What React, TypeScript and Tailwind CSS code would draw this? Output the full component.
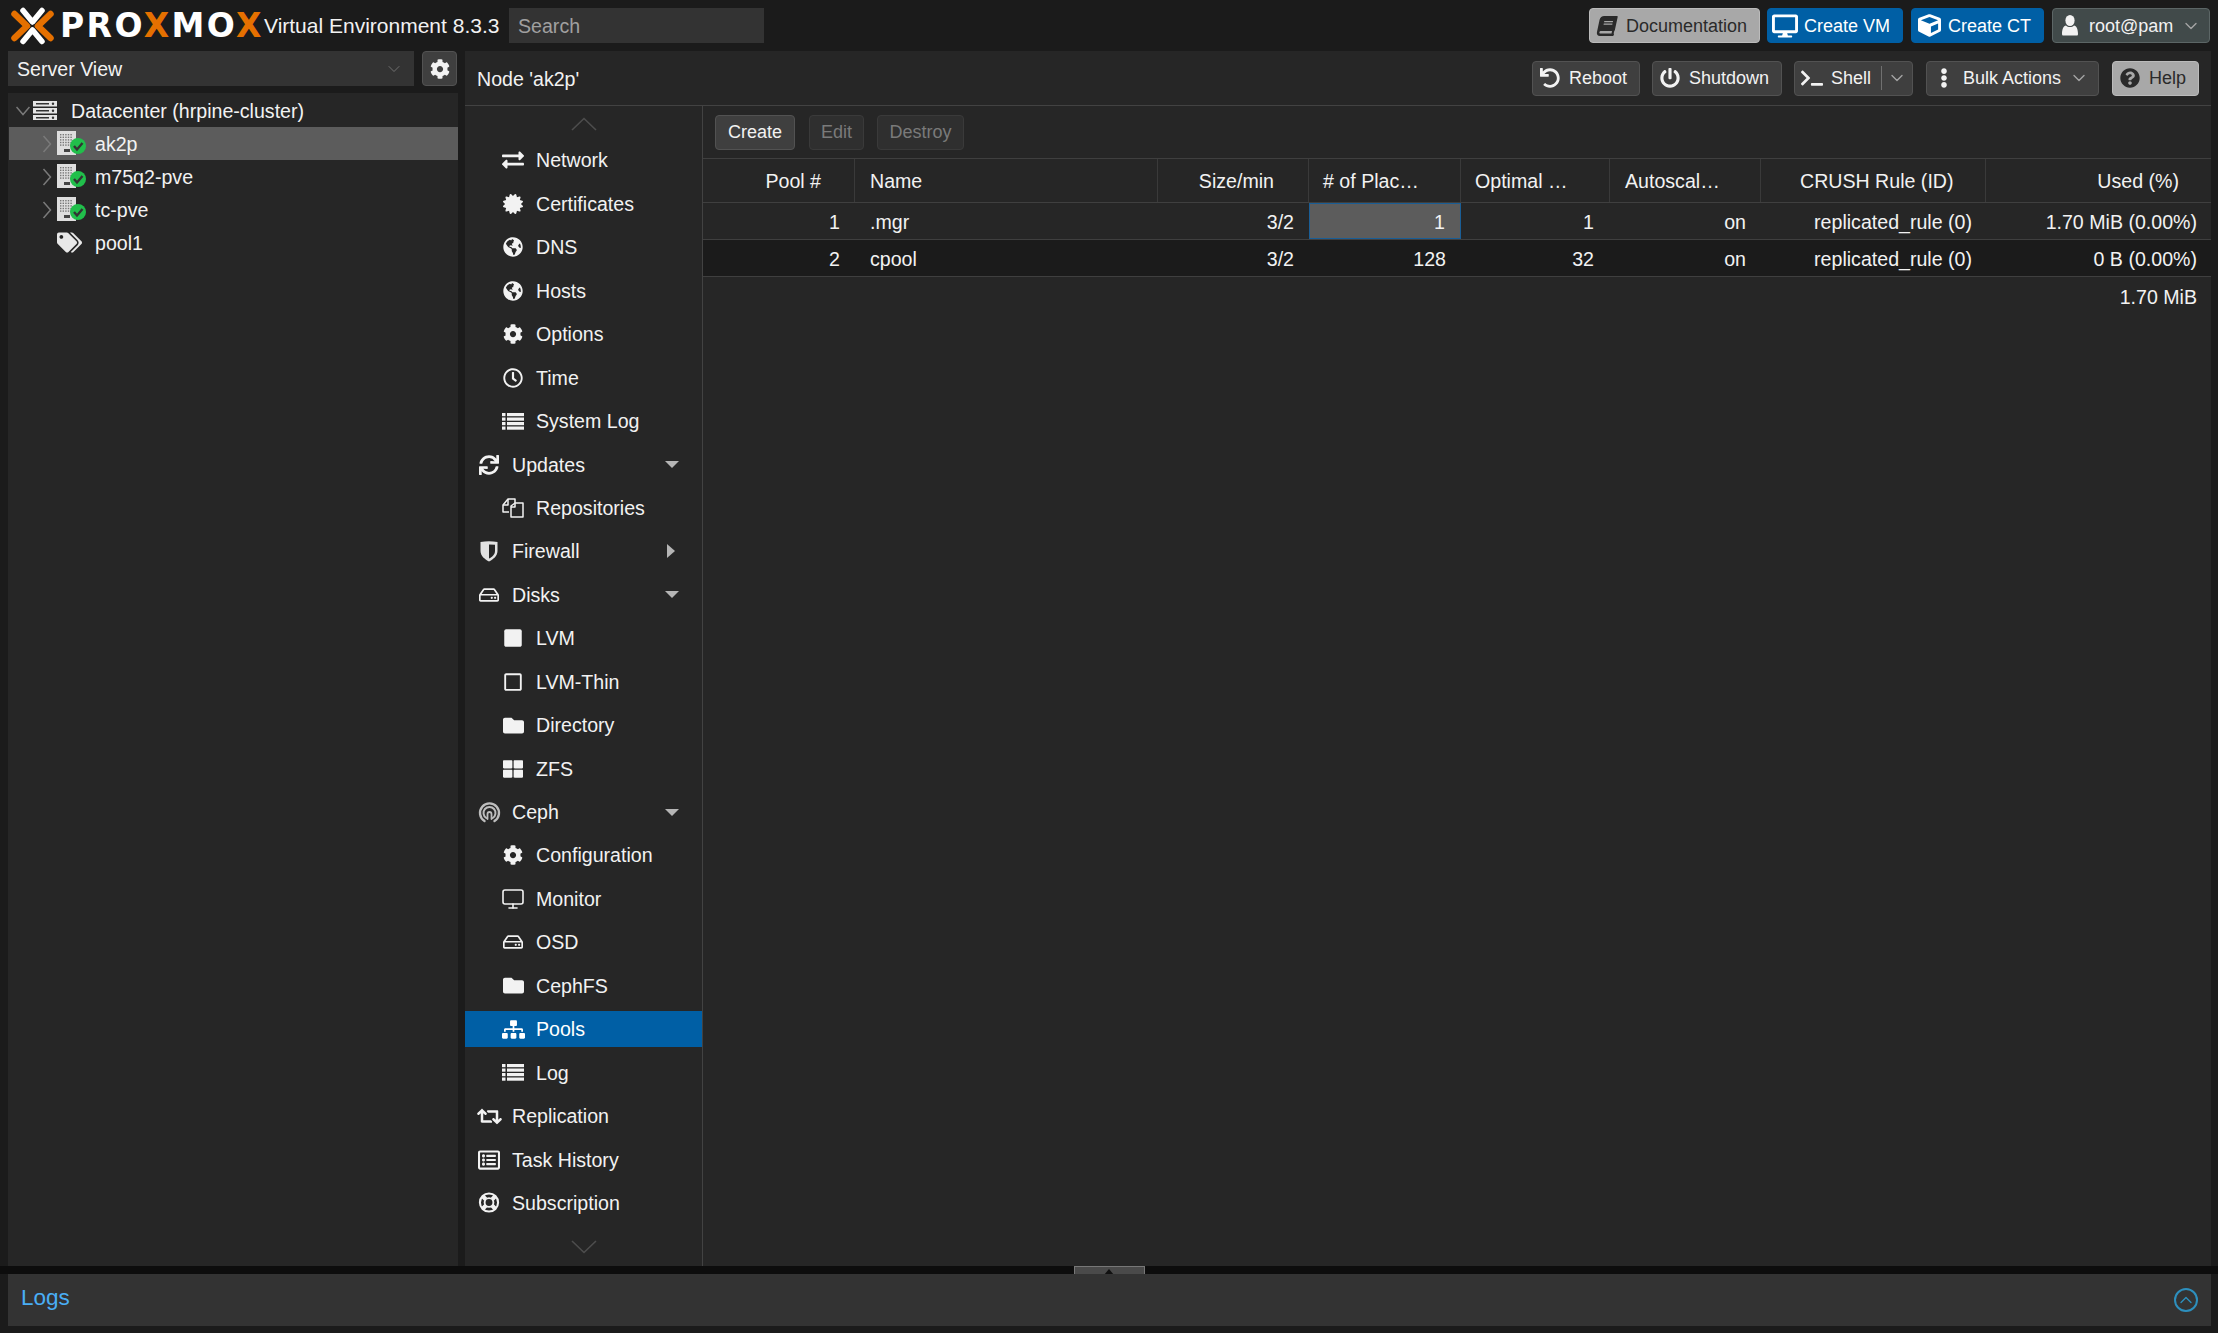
import type { ReactNode } from 'react';
import { ChevronDown, ChevronUp, Monitor } from 'lucide-react';
import {
  FaBook,
  FaCertificate,
  FaCog,
  FaCube,
  FaDesktop,
  FaEllipsisV,
  FaExchangeAlt,
  FaFolder,
  FaGlobeAmericas,
  FaPowerOff,
  FaQuestionCircle,
  FaRegClock,
  FaRegHdd,
  FaRegListAlt,
  FaRegSquare,
  FaRetweet,
  FaSitemap,
  FaSquare,
  FaSync,
  FaTags,
  FaTerminal,
  FaThLarge,
  FaUndo,
} from 'react-icons/fa';

function LogoMark() {
  return (
    <svg width="43" height="38" viewBox="0 0 43 38" fill="none" strokeLinecap="round" strokeLinejoin="round">
      <path d="M3.5 7 L16 19 L3.5 31 M39.5 7 L27 19 L39.5 31" stroke="#e57000" strokeWidth="6.5" />
      <path d="M12 3.5 L21.5 15 L31 3.5 M12 34.5 L21.5 23 L31 34.5" stroke="#ffffff" strokeWidth="5.5" />
    </svg>
  );
}

function DatacenterIcon() {
  return (
    <svg width="24" height="19" viewBox="0 0 24 19">
      {[0, 7, 14].map((y) => (
        <g key={y}>
          <rect x="0" y={y} width="24" height="5.5" fill="#e4e4e4" />
          <rect x="3" y={y + 2} width="13" height="1.5" fill="#333333" />
          <circle cx="20" cy={y + 2.75} r="1.2" fill="#333333" />
        </g>
      ))}
    </svg>
  );
}

function NodeIcon() {
  const dots = [];
  for (let r = 0; r < 5; r++) {
    for (let c = 0; c < 5; c++) {
      dots.push(<rect key={`${r}-${c}`} x={3 + c * 2.6} y={3 + r * 2.6} width="1.4" height="1.4" fill="#777777" />);
    }
  }
  return (
    <svg width="30" height="26" viewBox="0 0 30 26">
      <rect x="0" y="0" width="19" height="24" fill="#dedede" />
      {dots}
      <rect x="7" y="18" width="6" height="3" fill="#444444" />
      <circle cx="21" cy="15" r="8" fill="#21bf4b" />
      <path d="M17 15 L20 18.5 L25.5 12" fill="none" stroke="#333333" strokeWidth="2.4" />
    </svg>
  );
}

function CephIcon() {
  return (
    <svg width="23" height="22" viewBox="0 0 22 22" fill="none" stroke="#bdbdbd" strokeLinecap="round">
      <path d="M6 20 A9.5 9.5 0 1 1 16 20" strokeWidth="2.4" />
      <path d="M7.8 17 A6 6 0 1 1 14.2 17" strokeWidth="2" />
      <path d="M9 18 V13 A2 2 0 0 1 13 13 V18" strokeWidth="1.8" />
    </svg>
  );
}

function RowsIcon() {
  return (
    <svg width="22" height="17" viewBox="0 0 22 17" fill="#f2f2f2">
      {[0, 4.5, 9, 13.5].map((y) => (
        <g key={y}>
          <rect x="0" y={y} width="3.5" height="3.2" />
          <rect x="5" y={y} width="17" height="3.2" />
        </g>
      ))}
    </svg>
  );
}

function FilesIcon() {
  return (
    <svg width="22" height="20" viewBox="0 0 22 20" fill="none" stroke="#f2f2f2" strokeWidth="1.5" strokeLinejoin="round">
      <path d="M7 14 H1 V7 L6 1 H13 V5" />
      <path d="M6 1 V7 H1" />
      <path d="M9 19 V8 L13 5 H21 V19 Z" />
      <path d="M13 5 V9 H9" />
    </svg>
  );
}

function ShieldIcon() {
  return (
    <svg width="18" height="21" viewBox="0 0 18 21">
      <path d="M0.5 1 Q9 -0.5 17.5 1 V10 C17.5 15 13 18.5 9 20.5 C5 18.5 0.5 15 0.5 10 Z" fill="#e2e2e2" />
      <path d="M9 3.5 Q12 3.5 15 3.8 V10 C15 13.5 12 16 9 17.5 Z" fill="#262626" />
    </svg>
  );
}

function LifeRingIcon() {
  return (
    <svg width="22" height="21" viewBox="0 0 22 22" fill="none" stroke="#f2f2f2">
      <circle cx="11" cy="11" r="9.5" strokeWidth="2.2" />
      <circle cx="11" cy="11" r="4.6" strokeWidth="2" />
      <path d="M4.5 4.5 L7.5 7.5 M17.5 4.5 L14.5 7.5 M4.5 17.5 L7.5 14.5 M17.5 17.5 L14.5 14.5" strokeWidth="4.4" />
    </svg>
  );
}

function UserIcon() {
  return (
    <svg width="16" height="21" viewBox="0 0 16 21" fill="#f2f2f2">
      <ellipse cx="8" cy="5.5" rx="4.6" ry="5.5" />
      <path d="M1 20.5 Q0 20.5 0 19 C0 14 1.5 11 4 10.5 C6 12.5 10 12.5 12 10.5 C14.5 11 16 14 16 19 Q16 20.5 15 20.5 Z" />
    </svg>
  );
}

function TreeChevron({ open }: { open?: boolean }) {
  return (
    <svg width="14" height="20" viewBox="0 0 14 20" fill="none" stroke="#7a7a7a" strokeWidth="1.5" className="shrink-0">
      {open ? <path d="M0.5 6 L7 13.5 L13.5 6" /> : <path d="M3.5 2 L10.5 10 L3.5 18" />}
    </svg>
  );
}

function Btn({
  icon,
  label,
  w,
  tone,
  after,
}: {
  icon: ReactNode;
  label: string;
  w: string;
  tone: string;
  after?: ReactNode;
}) {
  return (
    <div className={`flex items-center rounded-[4px] border text-[18px] ${w} ${tone}`}>
      <span className="ml-[7px] flex w-[20px] justify-center text-[20px] [&>svg]:shrink-0">{icon}</span>
      <span className="ml-[9px] flex-1 whitespace-nowrap">{label}</span>
      {after}
    </div>
  );
}

const DARK_BTN = 'h-[35px] border-[#525252] bg-[#3f3f3f] text-[#f2f2f2]';
const BLUE_BTN = 'h-[35px] border-[#005fa5] bg-[#005fa5] text-[#ffffff]';
const GREY_BTN = 'h-[35px] border-[#bbbbbb] bg-[#a8a8a8] text-[#2a2a2a]';

type NavItem = { label: string; icon: ReactNode; sub?: boolean; caret?: 'down' | 'right'; active?: boolean };

const NAV: NavItem[] = [
  { label: 'Network', icon: <FaExchangeAlt className="text-[22px]" />, sub: true },
  { label: 'Certificates', icon: <FaCertificate />, sub: true },
  { label: 'DNS', icon: <FaGlobeAmericas />, sub: true },
  { label: 'Hosts', icon: <FaGlobeAmericas />, sub: true },
  { label: 'Options', icon: <FaCog />, sub: true },
  { label: 'Time', icon: <FaRegClock />, sub: true },
  { label: 'System Log', icon: <RowsIcon />, sub: true },
  { label: 'Updates', icon: <FaSync />, caret: 'down' },
  { label: 'Repositories', icon: <FilesIcon />, sub: true },
  { label: 'Firewall', icon: <ShieldIcon />, caret: 'right' },
  { label: 'Disks', icon: <FaRegHdd />, caret: 'down' },
  { label: 'LVM', icon: <FaSquare />, sub: true },
  { label: 'LVM-Thin', icon: <FaRegSquare />, sub: true },
  { label: 'Directory', icon: <FaFolder className="text-[21px]" />, sub: true },
  { label: 'ZFS', icon: <FaThLarge />, sub: true },
  { label: 'Ceph', icon: <CephIcon />, caret: 'down' },
  { label: 'Configuration', icon: <FaCog />, sub: true },
  { label: 'Monitor', icon: <Monitor size={24} strokeWidth={1.6} />, sub: true },
  { label: 'OSD', icon: <FaRegHdd />, sub: true },
  { label: 'CephFS', icon: <FaFolder className="text-[21px]" />, sub: true },
  { label: 'Pools', icon: <FaSitemap className="text-[23px]" />, sub: true, active: true },
  { label: 'Log', icon: <RowsIcon />, sub: true },
  { label: 'Replication', icon: <FaRetweet className="text-[25px]" /> },
  { label: 'Task History', icon: <FaRegListAlt className="text-[22px]" /> },
  { label: 'Subscription', icon: <LifeRingIcon /> },
];

function NavRow({ item }: { item: NavItem }) {
  return (
    <div
      className={`flex h-[36px] shrink-0 items-center ${item.sub ? 'pl-[35px]' : 'pl-[11px]'} ${
        item.active ? 'bg-[#005fa5] text-white' : ''
      }`}
    >
      <span className="flex w-[26px] justify-center text-[20px] [&>svg]:shrink-0">{item.icon}</span>
      <span className="ml-[10px] flex-1">{item.label}</span>
      {item.caret === 'down' && (
        <span className="mr-[23px] h-0 w-0 border-x-[7.5px] border-t-[7px] border-x-transparent border-t-[#b5b5b5]" />
      )}
      {item.caret === 'right' && (
        <span className="mr-[27px] h-0 w-0 border-y-[7px] border-l-[8px] border-y-transparent border-l-[#b5b5b5]" />
      )}
    </div>
  );
}

function TreeNode({ name, active }: { name: string; active?: boolean }) {
  return (
    <div className={`ml-[1px] flex h-[33px] items-center pl-[31px] ${active ? 'bg-[#5c5c5c]' : ''}`}>
      <TreeChevron />
      <span className="ml-[3px] flex"><NodeIcon /></span>
      <span className="ml-[8px]">{name}</span>
    </div>
  );
}

const COLS = 'grid grid-cols-[152px_303px_151px_152px_149px_151px_225px_225px]';
const HEAD_CELL = 'flex h-full items-center border-r border-[#3a3a3a] whitespace-nowrap';

function PoolRow({
  id,
  name,
  pgs,
  optimal,
  used,
  dark,
  selected,
}: {
  id: string;
  name: string;
  pgs: string;
  optimal: string;
  used: string;
  dark?: boolean;
  selected?: boolean;
}) {
  return (
    <div className={`${COLS} h-[37px] items-center border-b border-[#3f3f3f] ${dark ? 'bg-[#1b1b1b]' : ''}`}>
      <div className="pt-[2px] pr-[15px] text-right">{id}</div>
      <div className="pt-[2px] pl-[15px]">{name}</div>
      <div className="pt-[2px] pr-[15px] text-right">3/2</div>
      <div
        className={`flex h-full items-center justify-end pt-[2px] pr-[15px] ${
          selected ? 'border border-[#1a5e96] bg-[#5c5c5c]' : ''
        }`}
      >
        {pgs}
      </div>
      <div className="pt-[2px] pr-[16px] text-right">{optimal}</div>
      <div className="pt-[2px] pr-[15px] text-right">on</div>
      <div className="pt-[2px] pr-[14px] text-right">replicated_rule (0)</div>
      <div className="pt-[2px] pr-[14px] text-right">{used}</div>
    </div>
  );
}

export default function App() {
  return (
    <div className="flex h-[1333px] w-[2218px] flex-col overflow-hidden bg-[#1b1b1b] font-['Liberation_Sans',sans-serif] text-[19.6px] leading-[22px] text-[#f2f2f2]">
      {/* top bar */}
      <header className="flex h-[51px] shrink-0 items-center pr-[8px] pl-[11px]">
        <LogoMark />
        <span className="ml-[6px] w-[204px] shrink-0 font-['DejaVu_Sans',sans-serif] text-[33px] leading-none font-bold tracking-[2.4px] text-white">
          PRO<span className="text-[#e57000]">X</span>MO<span className="text-[#e57000]">X</span>
        </span>
        <span className="w-[245px] shrink-0 text-[21px] whitespace-nowrap">Virtual Environment 8.3.3</span>
        <div className="flex h-[35px] w-[255px] items-center bg-[#333333] pl-[9px] text-[#a0a0a0]">Search</div>
        <div className="ml-auto flex items-center gap-[7px]">
          <Btn icon={<FaBook className="-skew-x-12" />} label="Documentation" w="w-[171px]" tone={GREY_BTN} />
          <Btn icon={<FaDesktop className="text-[26px]" />} label="Create VM" w="w-[136px]" tone={BLUE_BTN} />
          <Btn icon={<FaCube className="text-[23px]" />} label="Create CT" w="ml-[1px] w-[133px]" tone={BLUE_BTN} />
          <Btn
            icon={<UserIcon />}
            label="root@pam"
            w="ml-[1px] w-[158px]"
            tone="h-[35px] border-[#5c6666] bg-[#414a4a] text-[#f2f2f2]"
            after={<ChevronDown size={20} strokeWidth={1.6} className="mr-[8px] text-[#a5a5a5]" />}
          />
        </div>
      </header>

      {/* main */}
      <div className="flex min-h-0 flex-1 gap-[7px] pl-[8px]">
        <aside className="flex w-[450px] flex-col gap-[7px]">
          <div className="flex h-[35px] gap-[8px]">
            <div className="flex w-[406px] items-center justify-between bg-[#333333] pr-[10px] pl-[9px]">
              Server View
              <ChevronDown size={20} strokeWidth={1.2} className="text-[#707070]" />
            </div>
            <div className="flex w-[35px] items-center justify-center rounded-[4px] border border-[#525252] bg-[#3f3f3f] text-[20px]">
              <FaCog />
            </div>
          </div>
          <div className="flex-1 bg-[#262626]">
            <div className="flex h-[34px] items-center pt-[1px] pl-[8px]">
              <TreeChevron open />
              <span className="ml-[3px] flex"><DatacenterIcon /></span>
              <span className="ml-[14px]">Datacenter (hrpine-cluster)</span>
            </div>
            <TreeNode name="ak2p" active />
            <TreeNode name="m75q2-pve" />
            <TreeNode name="tc-pve" />
            <div className="flex h-[33px] items-center pl-[49px]">
              <span className="flex w-[38px] text-[25px] text-[#e8e8e8]"><FaTags /></span>
              {'pool1'}
            </div>
          </div>
        </aside>

        <main className="flex w-[1746px] flex-col bg-[#262626]">
          <div className="flex h-[55px] shrink-0 items-center justify-between border-b border-[#424242] pr-[12px] pl-[12px]">
            <span className="pt-[2px]">Node 'ak2p'</span>
            <div className="flex items-center gap-[12px]">
              <Btn icon={<FaUndo />} label="Reboot" w="w-[108px]" tone={DARK_BTN} />
              <Btn icon={<FaPowerOff />} label="Shutdown" w="w-[130px]" tone={DARK_BTN} />
              <Btn
                icon={<FaTerminal className="text-[22px]" />}
                label="Shell"
                w="w-[119px]"
                tone={DARK_BTN}
                after={
                  <span className="flex h-[24px] items-center border-l border-[#707070] pr-[5px] pl-[5px]">
                    <ChevronDown size={20} strokeWidth={1.6} className="text-[#a5a5a5]" />
                  </span>
                }
              />
              <Btn
                icon={<FaEllipsisV />}
                label="Bulk Actions"
                w="ml-[1px] w-[173px]"
                tone={DARK_BTN}
                after={<ChevronDown size={20} strokeWidth={1.6} className="mr-[9px] text-[#a5a5a5]" />}
              />
              <Btn icon={<FaQuestionCircle />} label="Help" w="ml-[1px] w-[87px]" tone={GREY_BTN} />
            </div>
          </div>

          <div className="flex min-h-0 flex-1">
            {/* side menu */}
            <nav className="flex w-[238px] shrink-0 flex-col gap-[7.45px] border-r border-[#424242]">
              <div className="flex h-[29px] shrink-0 items-end justify-center pb-[4px]">
                <svg width="26" height="14" viewBox="0 0 26 14" fill="none" stroke="#4d4d4d" strokeWidth="1.6">
                  <path d="M1 13 L13 1.5 L25 13" />
                </svg>
              </div>
              {NAV.map((item) => (
                <NavRow key={item.label} item={item} />
              ))}
              <div className="flex h-[30px] shrink-0 items-start justify-center pt-[12px]">
                <svg width="26" height="14" viewBox="0 0 26 14" fill="none" stroke="#4d4d4d" strokeWidth="1.6">
                  <path d="M1 1 L13 12.5 L25 1" />
                </svg>
              </div>
            </nav>

            {/* pools grid */}
            <section className="flex min-w-0 flex-1 flex-col">
              <div className="flex h-[53px] items-center gap-[13px] border-b border-[#3f3f3f] pl-[12px] text-[18px]">
                <div className="flex h-[35px] w-[80px] items-center justify-center rounded-[4px] border border-[#525252] bg-[#3f3f3f]">
                  Create
                </div>
                <div className="ml-[1px] flex h-[35px] w-[55px] items-center justify-center rounded-[4px] border border-[#3a3a3a] bg-[#2f2f2f] text-[#7a7a7a]">
                  Edit
                </div>
                <div className="flex h-[35px] w-[87px] items-center justify-center rounded-[4px] border border-[#3a3a3a] bg-[#2f2f2f] text-[#7a7a7a]">
                  Destroy
                </div>
              </div>
              <div className={`${COLS} h-[44px] border-b border-[#3f3f3f]`}>
                <div className={`${HEAD_CELL} justify-end pr-[33px]`}>Pool #</div>
                <div className={`${HEAD_CELL} pl-[15px]`}>Name</div>
                <div className={`${HEAD_CELL} justify-end pr-[34px]`}>Size/min</div>
                <div className={`${HEAD_CELL} pl-[14px]`}># of Plac…</div>
                <div className={`${HEAD_CELL} pl-[14px]`}>Optimal …</div>
                <div className={`${HEAD_CELL} pl-[15px]`}>Autoscal…</div>
                <div className={`${HEAD_CELL} pl-[39px]`}>CRUSH Rule (ID)</div>
                <div className="flex h-full items-center justify-end pr-[32px]">Used (%)</div>
              </div>
              <PoolRow id="1" name=".mgr" pgs="1" optimal="1" used="1.70 MiB (0.00%)" selected />
              <PoolRow id="2" name="cpool" pgs="128" optimal="32" used="0 B (0.00%)" dark />
              <div className="flex h-[37px] items-center justify-end pt-[2px] pr-[14px]">1.70 MiB</div>
            </section>
          </div>
        </main>
      </div>

      {/* splitter + collapsed log panel */}
      <div className="flex h-[8px] shrink-0 justify-center bg-[#0d0d0d]">
        <div className="flex h-[8px] w-[71px] justify-center border-x border-t border-[#777777] bg-[#4a4a4a]">
          <span className="mt-[2px] h-0 w-0 border-x-[5px] border-b-[6px] border-x-transparent border-b-[#111111]" />
        </div>
      </div>
      <div className="mr-[7px] ml-[8px] flex h-[52px] shrink-0 items-center justify-between bg-[#333333] pr-[13px] pl-[13px]">
        <span className="mb-[4px] text-[22.5px] text-[#4aaef5]">Logs</span>
        <span className="flex h-[24px] w-[24px] items-center justify-center rounded-full border-2 border-[#2d8fbd] text-[#2d8fbd]">
          <ChevronUp size={22} strokeWidth={1.6} />
        </span>
      </div>
      <div className="h-[7px] shrink-0" />
    </div>
  );
}
